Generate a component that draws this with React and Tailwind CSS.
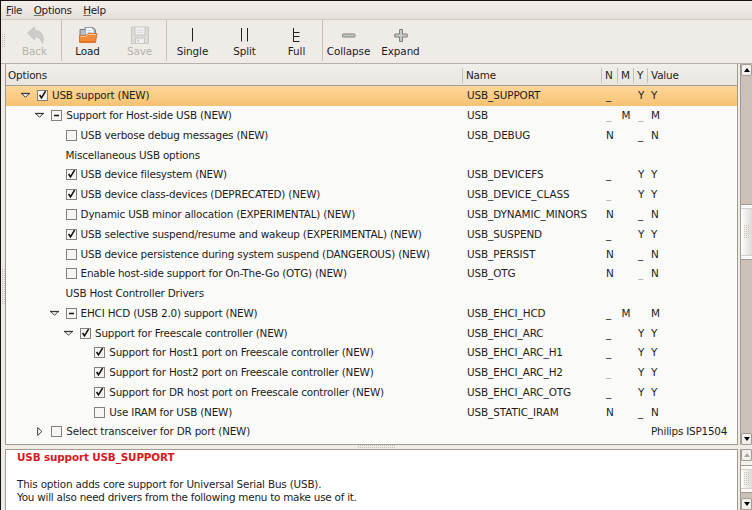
import React from "react";

const rows = [
  [0, "open", "on", "USB support (NEW)", "USB_SUPPORT", "_", "", "Y", "Y"],
  [1, "open", "mod", "Support for Host-side USB (NEW)", "USB", "-", "M", "-", "M"],
  [2, "", "off", "USB verbose debug messages (NEW)", "USB_DEBUG", "N", "", "_", "N"],
  [2, "", "", "Miscellaneous USB options", "", "", "", "", ""],
  [2, "", "on", "USB device filesystem (NEW)", "USB_DEVICEFS", "_", "", "Y", "Y"],
  [2, "", "on", "USB device class-devices (DEPRECATED) (NEW)", "USB_DEVICE_CLASS", "-", "", "Y", "Y"],
  [2, "", "off", "Dynamic USB minor allocation (EXPERIMENTAL) (NEW)", "USB_DYNAMIC_MINORS", "N", "", "_", "N"],
  [2, "", "on", "USB selective suspend/resume and wakeup (EXPERIMENTAL) (NEW)", "USB_SUSPEND", "_", "", "Y", "Y"],
  [2, "", "off", "USB device persistence during system suspend (DANGEROUS) (NEW)", "USB_PERSIST", "N", "", "_", "N"],
  [2, "", "off", "Enable host-side support for On-The-Go (OTG) (NEW)", "USB_OTG", "N", "", "-", "N"],
  [2, "", "", "USB Host Controller Drivers", "", "", "", "", ""],
  [2, "open", "mod", "EHCI HCD (USB 2.0) support (NEW)", "USB_EHCI_HCD", "_", "M", "", "M"],
  [3, "open", "on", "Support for Freescale controller (NEW)", "USB_EHCI_ARC", "_", "", "Y", "Y"],
  [4, "", "on", "Support for Host1 port on Freescale controller (NEW)", "USB_EHCI_ARC_H1", "_", "", "Y", "Y"],
  [4, "", "on", "Support for Host2 port on Freescale controller (NEW)", "USB_EHCI_ARC_H2", "-", "", "Y", "Y"],
  [4, "", "on", "Support for DR host port on Freescale controller (NEW)", "USB_EHCI_ARC_OTG", "_", "", "Y", "Y"],
  [4, "", "off", "Use IRAM for USB (NEW)", "USB_STATIC_IRAM", "N", "", "_", "N"],
  [1, "closed", "off", "Select transceiver for DR port (NEW)", "", "", "", "", "Philips ISP1504"],
];

const indents = ["w-[14px]", "w-[28.3px]", "w-[42.6px]", "w-[57px]", "w-[71.3px]"];

function Expander({ kind }) {
  return (
    <svg className="mr-[6px] h-[11px] w-[11px] shrink-0" viewBox="0 0 11 11" fill="#fff" stroke="#3c3935" strokeWidth="1">
      {kind === "open" && (
        <>
          <path d="M1.8 3.5H9.2L5.5 7.3Z" />
          <path d="M1 3.5H10" strokeWidth="1.3" />
        </>
      )}
      {kind === "closed" && <path d="M3.7 1.5V9.5L7.8 5.5Z" />}
    </svg>
  );
}

function Check({ state }) {
  return (
    <svg className="mr-[4px] h-[11px] w-[11px] shrink-0" viewBox="0 0 11 11" fill="none">
      <rect x=".5" y=".5" width="10" height="10" fill="#f6f5f3" stroke="#85807a" />
      {state === "on" && <path d="M2.6 5L4.5 7.8L8.6 1.2" stroke="#111" strokeWidth="1.6" />}
      {state === "mod" && <path d="M3 5.5H8" stroke="#111" strokeWidth="1.5" />}
    </svg>
  );
}

function Cell({ value, width }) {
  return (
    <span className={`${width} shrink-0 ${value === "-" ? "text-[#aaa]" : ""}`}>{value === "-" ? "_" : value}</span>
  );
}

function Row({ row, selected }) {
  const [level, expander, check, label, name, n, m, y, value] = row;
  return (
    <div className={`flex h-[19.77px] shrink-0 items-center ${selected ? "bg-linear-to-b from-[#ffd799] to-[#f4c272]" : ""}`}>
      <div className="flex w-[461px] shrink-0 items-center">
        <span className={`${indents[level]} shrink-0`} />
        <Expander kind={expander} />
        {check && <Check state={check} />}
        <span className="tracking-[-0.19px]">{label}</span>
      </div>
      <span className="w-[139px] shrink-0 tracking-[-0.08px]">{name}</span>
      <Cell value={n} width="w-[15.5px]" />
      <Cell value={m} width="w-[16.5px]" />
      <Cell value={y} width="w-[13px]" />
      <span className="tracking-[-0.2px]">{value}</span>
    </div>
  );
}

function HeaderCell({ width, children }) {
  return (
    <div className={`${width} flex h-[15px] shrink-0 items-center border-l border-[#c5bfb8] pl-[3px]`}>{children}</div>
  );
}

const icons = {
  back: (
    <path d="M5.5 7L12.5 1V4.5C19 4.5 23 9 20.5 17.5C19 13 16.5 11 12.5 10.8V14Z" fill="#cecccA" stroke="#c0beba" strokeWidth=".7" />
  ),
  load: (
    <>
      <path d="M5 12V3.5H10V1.5H18L20.5 4V10Z" fill="#b9bcbd" stroke="#6e7173" strokeWidth=".9" />
      <path d="M10.5 10V1.5H16.5L19 4V10Z" fill="#f6f9fc" stroke="#8d9aaa" strokeWidth=".7" />
      <path d="M12.5 4.5H15.5M12.5 6.5H17.5" stroke="#b3c6dd" strokeWidth=".8" />
      <path d="M4.5 16.5V9.5H11L13 7.5H22L20.5 16.5Z" fill="#f28c3b" stroke="#c56a28" strokeWidth=".8" />
      <path d="M5.3 10.4H11.4L13.4 8.4H21" stroke="#ffc999" />
      <path d="M5.3 15.6H20" stroke="#e67116" />
    </>
  ),
  save: (
    <>
      <path d="M4.5 1H21.5V17.5H4.5Z" fill="#dddbd8" stroke="#cac8c5" />
      <path d="M8 1.5V9H18V1.5M8.5 17V12H17.5V17" fill="#f0eeec" stroke="#c9c7c3" />
      <path d="M10 4.5H16M10 6.5H16" stroke="#dad7d4" strokeWidth=".8" />
      <path d="M11.2 13.5V16" stroke="#c5c2be" strokeWidth="1.5" />
    </>
  ),
  single: <path d="M12.5 2V15.5" stroke="#222" />,
  split: <path d="M9.5 2V15.5M15.5 2V15.5" stroke="#222" />,
  full: <path d="M9.5 2V16M9.5 6.5H15.5M9.5 10.5H15.5M9.5 15.5H15.5" stroke="#222" />,
  collapse: <rect x="6.5" y="8" width="12.5" height="3" rx=".6" fill="#c5c8c4" stroke="#7f817c" />,
  expand: (
    <path d="M11.5 3.5H14.5V8H19.2V11H14.5V15.5H11.5V11H6.8V8H11.5Z" fill="#c5c8c4" stroke="#7f817c" />
  ),
};

function Tool({ icon, label, width, disabled }) {
  return (
    <div className={`${width} flex shrink-0 flex-col items-center ${disabled ? "text-[#b5b1ad]" : ""}`}>
      <svg className="mt-[6px] h-[19px] w-[26px]" viewBox="0 0 26 19" fill="none">{icons[icon]}</svg>
      <span className="h-[14px] leading-[13px] tracking-[-0.1px]">{label}</span>
    </div>
  );
}

function Separator() {
  return <div className="h-[41px] w-px shrink-0 bg-[#c9c3bd]" />;
}

function Arrow({ up, disabled }) {
  return (
    <div className="flex h-[12px] w-full shrink-0 items-center justify-center rounded-xs border border-[#a39a91] bg-[#f3f1ee]">
      <svg className={`h-[4px] w-[6px] ${disabled ? "fill-[#aaa49e]" : "fill-black"}`} viewBox="0 0 6 4">
        <path d={up ? "M0 4L3 0L6 4Z" : "M0 0H6L3 4Z"} />
      </svg>
    </div>
  );
}

function Grip({ className }) {
  return (
    <div
      className={`${className} bg-[conic-gradient(from_270deg_at_1px_1px,#c6bfb8_90deg,transparent_90deg)] bg-size-[2px_2px]`}
    />
  );
}

function Thumb({ height }) {
  return (
    <div className={`${height} flex w-full shrink-0 flex-col items-center justify-between border-y border-[#a39a91] bg-linear-to-r from-white to-[#dedad6]`}>
      <div className="h-[4px] w-full border-b border-[#d4cec8] bg-[#faf9f8]" />
      <Grip className="h-[14px] w-[6px]" />
      <div className="h-[4px] w-full border-t border-[#d4cec8] bg-[#faf9f8]" />
    </div>
  );
}

export default function App() {
  return (
    <div className="flex h-[510px] w-[752px] flex-col overflow-hidden border-t border-l border-[#17110f] bg-[#efebe7] font-['DejaVu_Sans',sans-serif] text-[10.4px] leading-[13px] whitespace-nowrap text-[#1c1c1c]">
      <nav className="flex h-[19px] shrink-0 items-center gap-[11.5px] border-b border-[#cfc9c2] bg-linear-to-b from-[#f2efec] to-[#e5e0da] pl-[5px] tracking-[-0.3px]">
        <span><u className="decoration-[#77726d]">F</u>ile</span>
        <span><u className="decoration-[#77726d]">O</u>ptions</span>
        <span><u className="decoration-[#77726d]">H</u>elp</span>
      </nav>
      <div className="flex h-[44px] shrink-0 items-start border-b border-[#b8b0a8]">
        <Grip className="mt-[14px] ml-px h-[14px] w-[4px]" />
        <Tool icon="back" label="Back" width="w-[55px] pl-[2px]" disabled />
        <Separator />
        <Tool icon="load" label="Load" width="w-[51px]" />
        <Tool icon="save" label="Save" width="w-[53px]" disabled />
        <Separator />
        <Tool icon="single" label="Single" width="w-[51px]" />
        <Tool icon="split" label="Split" width="w-[53px]" />
        <Tool icon="full" label="Full" width="w-[51px]" />
        <Separator />
        <Tool icon="collapse" label="Collapse" width="w-[51px]" />
        <Tool icon="expand" label="Expand" width="w-[53px]" />
      </div>
      <div className="flex h-[381px] shrink-0">
        <div className="flex w-[4px] shrink-0 items-center justify-center pt-[64px]">
          <Grip className="h-[36px] w-[3px]" />
        </div>
        <div className="flex w-[733px] shrink-0 flex-col overflow-hidden border-x border-b border-[#a39a91] bg-[#fafaf9]">
          <div className="flex h-[22px] shrink-0 items-center border-b border-[#a39a91] bg-linear-to-b from-[#f1efeb] to-[#e9e6e1] pt-px tracking-[-0.15px]">
            <span className="w-[456px] shrink-0 pl-[2px]">Options</span>
            <HeaderCell width="w-[139px]">Name</HeaderCell>
            <HeaderCell width="w-[16px]">N</HeaderCell>
            <HeaderCell width="w-[16px]">M</HeaderCell>
            <HeaderCell width="w-[14px]">Y</HeaderCell>
            <HeaderCell width="w-[80px]">Value</HeaderCell>
          </div>
          {rows.map((row, i) => <Row key={i} row={row} selected={i === 0} />)}
        </div>
        <div className="ml-[2px] flex w-[12px] shrink-0 flex-col border-l border-[#a39a91] bg-[#cbc1b8]">
          <Arrow up />
          <div className="h-[128px] shrink-0" />
          <Thumb height="h-[56px]" />
          <div className="grow" />
          <Arrow />
        </div>
      </div>
      <div className="flex h-[4px] shrink-0 justify-center">
        <Grip className="h-[4px] w-[38px]" />
      </div>
      <div className="flex h-[61px] shrink-0">
        <div className="ml-[4px] w-[733px] shrink-0 border-x border-t border-[#a39a91] bg-white pt-px pl-[11px]">
          <p className="font-bold tracking-[-0.13px] text-[#d8171d]">USB support USB_SUPPORT</p>
          <p className="mt-[14px] tracking-[-0.18px]">This option adds core support for Universal Serial Bus (USB).</p>
          <p className="tracking-[-0.24px]">You will also need drivers from the following menu to make use of it.</p>
        </div>
        <div className="ml-[2px] flex w-[12px] shrink-0 flex-col border-l border-[#a39a91] bg-[#cbc1b8]">
          <Arrow up disabled />
          <div className="h-[4px] shrink-0 bg-[#f3f1ee]" />
          <Thumb height="h-[28px]" />
          <div className="grow" />
          <Arrow />
        </div>
      </div>
    </div>
  );
}
